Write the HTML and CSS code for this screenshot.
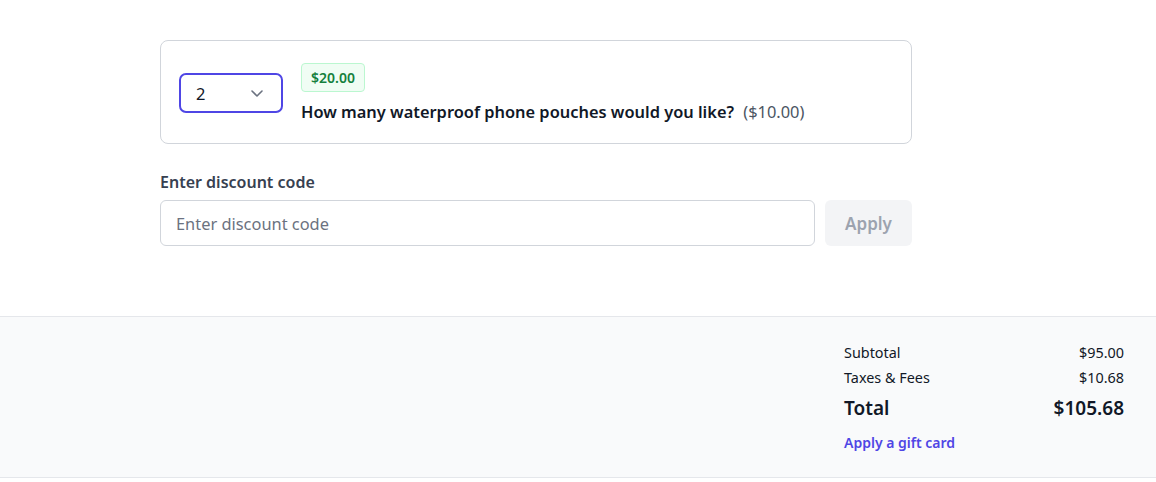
FILE: index.html
```html
<!DOCTYPE html>
<html>
<head>
<meta charset="utf-8">
<link rel="stylesheet" href="styles.css">
</head>
<body>
<main class="main">
  <div class="card">
    <div class="select">
      <span class="select-value">2</span>
      <svg class="chev" width="12" height="7" viewBox="0 0 12 7" fill="none" stroke="#6b7280" stroke-width="1.6" stroke-linecap="round" stroke-linejoin="round"><path d="M1 1l5 5 5-5"/></svg>
    </div>
    <div class="item-info">
      <span class="badge">$20.00</span>
      <div class="question">How many waterproof phone pouches would you like? <span class="unit">($10.00)</span></div>
    </div>
  </div>
  <div class="discount">
    <label class="label">Enter discount code</label>
    <div class="discount-row">
      <div class="input">Enter discount code</div>
      <button class="apply">Apply</button>
    </div>
  </div>
</main>
<footer class="footer">
  <div class="summary">
    <div class="row"><span>Subtotal</span><span>$95.00</span></div>
    <div class="row"><span>Taxes &amp; Fees</span><span>$10.68</span></div>
    <div class="row total"><span>Total</span><span>$105.68</span></div>
    <a class="gift">Apply a gift card</a>
  </div>
</footer>
</body>
</html>
```

FILE: styles.css
```css
* { box-sizing: border-box; }
html, body { margin: 0; padding: 0; background: #fff; }
body { font-family: "Noto Sans", "Open Sans", sans-serif; color: #111827; }

.main { width: 752px; margin-left: 160px; padding-top: 40px; padding-bottom: 70px; }

.card {
  border: 1px solid #d1d5db;
  border-radius: 8px;
  height: 104px;
  padding: 0 18px;
  display: flex;
  align-items: center;
  gap: 18px;
}
.select {
  width: 104px; height: 40px;
  border: 2px solid #4f46e5;
  border-radius: 7px;
  display: flex; align-items: center; justify-content: space-between;
  padding: 0 18px 0 15px;
  margin-top: 2px;
}
.select-value { font-size: 16.5px; color: #111827; }
.chev { display: block; }
.item-info { display: flex; flex-direction: column; align-items: flex-start; gap: 8px; padding-top: 3px; }
.badge {
  background: #f0fdf4; border: 1px solid #bbf7d0; color: #15803d;
  font-size: 14px; font-weight: 600; border-radius: 4px;
  height: 29px; padding: 0 9px; display: flex; align-items: center;
}
.question { font-size: 16.4px; font-weight: 600; color: #111827; line-height: 24px; }
.unit { font-weight: 400; color: #4b5563; margin-left: 5px; }

.discount { margin-top: 26px; }
.label { display: block; font-size: 16px; font-weight: 600; color: #374151; line-height: 24px; margin-bottom: 6px; }
.discount-row { display: flex; gap: 10px; }
.input {
  flex: 1; height: 46px; border: 1px solid #d1d5db; border-radius: 6px;
  display: flex; align-items: center; padding: 0 15px;
  font-size: 16.4px; color: #6b7280;
}
.apply {
  width: 87px; height: 46px; border: none; border-radius: 6px; background: #f3f4f6;
  color: #9ca3af; font-family: inherit; font-size: 17px; font-weight: 600; padding: 0;
}

.footer {
  border-top: 1px solid #e5e7eb; border-bottom: 1px solid #e5e7eb;
  background: #f9fafb; height: 162px;
  display: flex; justify-content: flex-end;
  padding: 23px 32px 0 0;
}
.summary { width: 280px; display: flex; flex-direction: column; }
.row { display: flex; justify-content: space-between; font-size: 14.4px; line-height: 25px; color: #111827; }
.row.total { font-size: 19px; font-weight: 600; line-height: 36px; }
.gift { color: #4f46e5; font-size: 14px; font-weight: 600; margin-top: 6px; line-height: 22px; }
```
